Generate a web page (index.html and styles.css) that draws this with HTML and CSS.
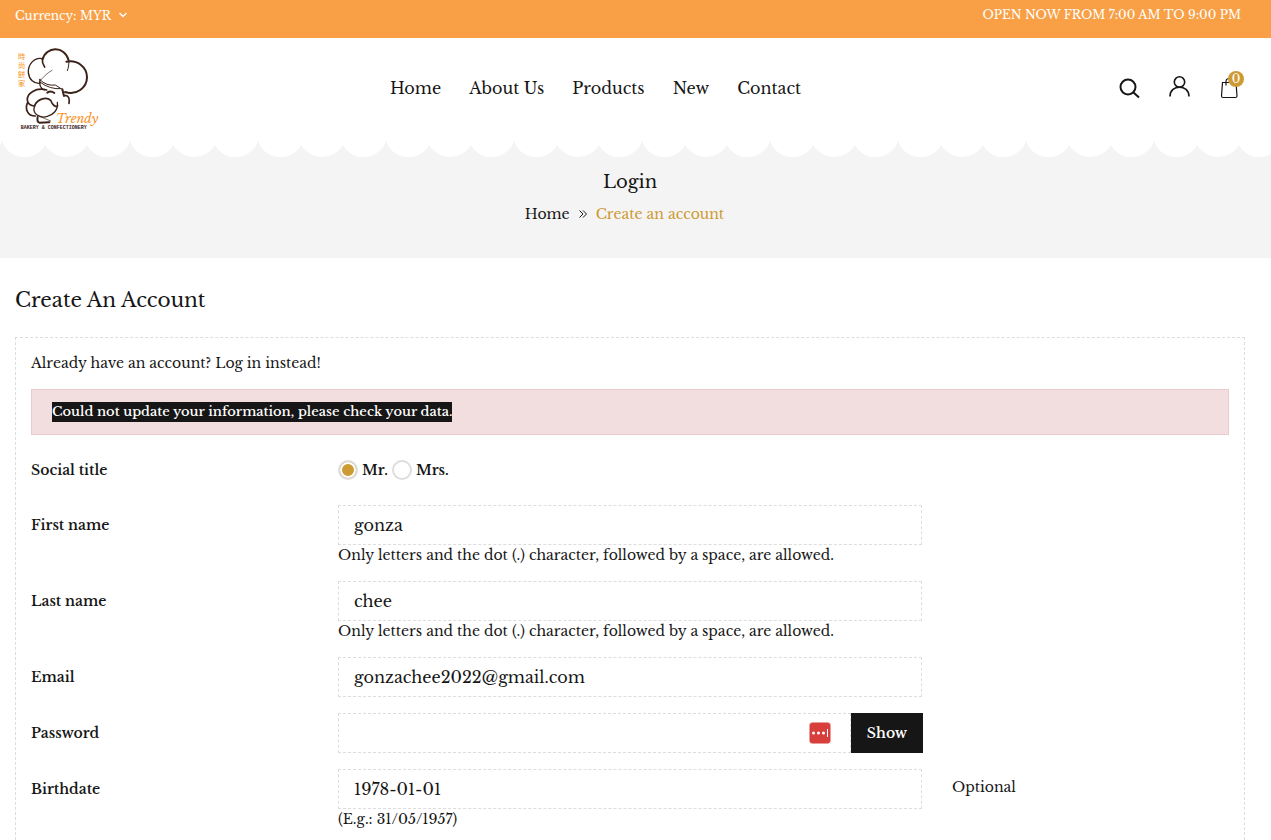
FILE: index.html
```html
<!DOCTYPE html>
<html lang="en">
<head>
  <meta charset="UTF-8">
  <meta name="viewport" content="width=device-width, initial-scale=1">
  <title>Create an account - Trendy Bakery</title>
  <link rel="stylesheet" href="styles.css">
</head>
<body>

<div class="topbar">
  <button type="button" class="currency">
    Currency: MYR
    <svg width="10" height="8" viewBox="0 0 10 8"><path d="M1.500 2 L5 5.500 L8.500 2" fill="none" stroke="#fff" stroke-width="1.500"/></svg>
  </button>
  <span>OPEN NOW FROM 7:00 AM TO 9:00 PM</span>
</div>

<header class="header">
  <a class="logo" href="#" aria-label="Trendy Bakery">
    <svg width="95" height="95" viewBox="15 0 285 285">
      <g fill="none" stroke="#3b2218" stroke-linecap="round" stroke-width="4">
        <!-- hat -->
        <path d="M98 55 C107 17 164 12 176 58" stroke-width="6"/>
        <path d="M97 53 C71 48 54 72 55 95 C57 115 72 129 90 127" stroke-width="4"/>
        <path d="M97 53 C96 63 99 71 104 78" stroke-width="5"/>
        <path d="M176 58 C178 70 175 80 172 89" stroke-width="3"/>
        <path d="M169 62 C202 55 230 78 231 108 C231 140 199 165 165 153" stroke-width="6"/>
        <path d="M88 122 C100 108 111 96 126 88" stroke-width="2"/>
        <path d="M89 116 Q110 136 136 132 L153 143" stroke-width="3"/>
        <path d="M91 124 Q120 146 154 143" stroke-width="3"/>
        <path d="M90 115 C87 130 91 142 103 147"/>
        <!-- face -->
        <path d="M110 147 C78 138 50 157 52 178 C54 190 62 194 74 195" stroke-width="5"/>
        <path d="M112 155 Q122 148 133 156" stroke-width="6"/>
        <path d="M157 145 L162 165" stroke-width="6"/>
        <path d="M165 163 Q181 164 177 187" stroke-width="5"/>
        <path d="M74 193 C84 172 110 167 122 178 C126 190 138 202 143 194" stroke-width="5"/>
        <path d="M74 195 C65 218 88 232 110 227 C130 222 145 207 142 184" stroke-width="4"/>
        <path d="M53 184 C44 203 52 225 76 225" stroke-width="5"/>
        <path d="M83 228 Q80 242 88 245 L118 244" stroke-width="6"/>
        <path d="M86 225 L122 240" stroke-width="2"/>
      </g>
      <g class="logo-cjk">
        <text x="24" y="55">時</text>
        <text x="24" y="82">尚</text>
        <text x="24" y="109">餅</text>
        <text x="24" y="136">家</text>
      </g>
      <text class="logo-name" x="138" y="246">Trendy</text>
      <text class="logo-sub" x="32" y="264">BAKERY &amp; CONFECTIONERY</text>
    </svg>
  </a>
  <nav class="nav">
    <a href="#">Home</a>
    <a href="#">About Us</a>
    <a href="#">Products</a>
    <a href="#">New</a>
    <a href="#">Contact</a>
  </nav>
  <div class="tools">
    <button type="button" aria-label="Search">
      <svg width="22" height="24" viewBox="0 0 22 24" fill="none" stroke="#161616" stroke-width="2">
        <circle cx="9" cy="11" r="7.500"/>
        <path d="M14.500 16.500 L20 21.500"/>
      </svg>
    </button>
    <a href="#" aria-label="My account">
      <svg width="22" height="24" viewBox="0 0 22 24" fill="none" stroke="#161616" stroke-width="1.600">
        <circle cx="10.500" cy="6" r="5.200"/>
        <path d="M1 20.500 C1 8 20 8 20 20.500"/>
      </svg>
    </a>
    <a href="#" class="cart" aria-label="Cart">
      <svg width="22" height="24" viewBox="0 0 22 24" fill="none" stroke="#161616" stroke-width="1.200">
        <path d="M3.500 6.500 H17 L18 20 Q18 21.500 16.500 21.500 H4 Q2.500 21.500 2.500 20 Z"/>
        <path d="M7 9.500 V5.500 Q7 2.500 10.500 2.500 Q14 2.500 14 5.500 V9.500"/>
      </svg>
      <span class="cart-count">0</span>
    </a>
  </div>
</header>

<section class="banner">
  <svg class="scallops" width="100%" height="17">
    <defs>
      <pattern id="scallop" x="2" width="128" height="17" patternUnits="userSpaceOnUse">
        <path fill="#fff" d="M0 0 V1 A23.500 23.500 0 0 0 43 5 A24.500 24.500 0 0 0 85 5 A23.500 23.500 0 0 0 128 1 V0 Z"/>
      </pattern>
    </defs>
    <rect width="100%" height="17" fill="url(#scallop)"/>
  </svg>
  <div class="banner-title">Login</div>
  <div class="breadcrumb">
    <a href="#">Home</a>
    <svg width="8" height="8" viewBox="0 0 8 8" fill="none" stroke="#161616"><path d="M0.500 0.500 L4 4 L0.500 7.500 M4 0.500 L7.500 4 L4 7.500"/></svg>
    <span class="current">Create an account</span>
  </div>
</section>

<main class="main">
  <h1>Create An Account</h1>

  <form class="register">
    <p class="login-hint">Already have an account? <a href="#">Log in instead!</a></p>

    <div class="alert"><span>Could not update your information, please check your data.</span></div>

    <div class="row row-title">
      <div class="label" id="title-label">Social title</div>
      <div class="field radios" role="radiogroup" aria-labelledby="title-label">
        <label><input type="radio" name="title" checked>Mr.</label>
        <label><input type="radio" name="title">Mrs.</label>
      </div>
    </div>

    <div class="row">
      <label class="label" for="firstname">First name</label>
      <div class="field">
        <input class="text" type="text" id="firstname" value="gonza">
        <div class="help">Only letters and the dot (.) character, followed by a space, are allowed.</div>
      </div>
    </div>

    <div class="row">
      <label class="label" for="lastname">Last name</label>
      <div class="field">
        <input class="text" type="text" id="lastname" value="chee">
        <div class="help">Only letters and the dot (.) character, followed by a space, are allowed.</div>
      </div>
    </div>

    <div class="row">
      <label class="label" for="email">Email</label>
      <div class="field">
        <input class="text" type="email" id="email" value="gonzachee2022@gmail.com">
      </div>
    </div>

    <div class="row">
      <label class="label" for="password">Password</label>
      <div class="field password">
        <input class="text" type="password" id="password">
        <svg class="key-icon" width="22" height="22" viewBox="0 0 22 22">
          <rect x="0.500" y="0.500" width="21" height="21" rx="3" fill="#d83f3c" stroke="#e89a98" stroke-width="0.500"/>
          <g fill="#fff">
            <circle cx="4.500" cy="11" r="1.500"/>
            <circle cx="9.500" cy="11" r="1.500"/>
            <circle cx="14.500" cy="11" r="1.500"/>
            <rect x="18" y="7" width="1" height="8"/>
          </g>
        </svg>
        <button type="button" class="show">Show</button>
      </div>
    </div>

    <div class="row">
      <label class="label" for="birthday">Birthdate</label>
      <div class="field">
        <input class="text" type="text" id="birthday" value="1978-01-01">
        <div class="help">(E.g.: 31/05/1957)</div>
      </div>
      <div class="optional">Optional</div>
    </div>
  </form>
</main>

</body>
</html>
```

FILE: styles.css
```css
* {
  box-sizing: border-box;
}

body {
  margin: 0;
  background: #fff;
  color: #161616;
  font-family: "Libre Baskerville", "Liberation Serif", "Noto Sans CJK TC", serif;
  font-size: 14px;
  line-height: 20px;
}

a {
  color: inherit;
  text-decoration: none;
}

button {
  font-family: inherit;
  border: 0;
  padding: 0;
  background: none;
  cursor: pointer;
}

.topbar {
  display: flex;
  justify-content: space-between;
  height: 38px;
  padding: 5px 30px 0 15px;
  background: #f99f46;
  color: #fff;
  font-size: 12px;
}

.currency {
  display: flex;
  align-items: center;
  gap: 7px;
  height: 20px;
  color: #fff;
  font-size: 12px;
}

.header {
  display: grid;
  grid-template-columns: 375px 1fr auto;
  align-items: center;
  height: 102px;
  padding: 0 30px 2px 15px;
}

.logo svg {
  display: block;
}

.logo-cjk {
  font-family: "Noto Sans CJK TC", sans-serif;
  font-size: 22px;
  fill: #f7931e;
}

.logo-name {
  font-size: 38px;
  font-style: italic;
  fill: #f7931e;
}

.logo-sub {
  font-family: "Liberation Mono", monospace;
  font-size: 15px;
  font-weight: bold;
  fill: #3b2218;
}

.nav {
  display: flex;
  gap: 28px;
  font-size: 16px;
}

.tools {
  display: flex;
  gap: 28px;
}

.tools svg {
  display: block;
}

.cart {
  position: relative;
}

.cart-count {
  position: absolute;
  top: -5px;
  right: -3px;
  width: 16px;
  height: 16px;
  border-radius: 50%;
  background: #cd9a33;
  color: #fff;
  font-size: 12px;
  line-height: 16px;
  text-align: center;
}

.banner {
  height: 118px;
  background: #f4f4f4;
  text-align: center;
}

.scallops {
  display: block;
}

.banner-title {
  padding: 15px 11px 0 0;
  font-size: 18px;
}

.breadcrumb {
  display: flex;
  justify-content: center;
  align-items: center;
  gap: 9px;
  padding: 12px 22px 0 0;
}

.current {
  color: #cd9a33;
}

.main {
  padding: 30px 26px 0 15px;
}

h1 {
  margin: 0 0 25px;
  font-size: 20px;
  font-weight: normal;
  line-height: 24px;
}

.register {
  border: 1px dashed #ddd;
  border-bottom: 0;
  padding: 15px 0 11px;
}

.login-hint {
  margin: 0 15px 16px;
}

.alert {
  margin: 0 15px 25px;
  padding: 12px 20px;
  border: 1px solid #ebcccc;
  background: #f2dede;
  font-size: 13px;
  font-weight: 500;
}

.alert span {
  display: inline-block;
  background: #161616;
  color: #fff;
}

.row {
  display: grid;
  grid-template-columns: 1fr 2fr 1fr;
  margin-bottom: 16px;
}

.row:last-child {
  margin-bottom: 0;
}

.row-title {
  margin-bottom: 25px;
}

.label {
  padding: 10px 15px 0;
  font-weight: 600;
}

.row-title .label {
  padding-top: 0;
}

.field {
  padding: 0 15px;
}

.radios {
  display: flex;
  gap: 4px;
  height: 20px;
}

.radios label {
  display: flex;
  gap: 4px;
  font-weight: 600;
}

.radios input {
  appearance: none;
  width: 20px;
  height: 20px;
  margin: 0;
  border: 2px solid #ddd;
  border-radius: 50%;
  background: #fff;
}

.radios input:checked {
  background: #cd9a33;
  box-shadow: inset 0 0 0 2px #fff;
}

.text {
  display: block;
  width: 100%;
  height: 40px;
  padding: 0 15px;
  border: 1px dashed #ddd;
  border-radius: 0;
  background: #fff;
  color: #161616;
  font-family: inherit;
  font-size: 16px;
}

.password {
  display: flex;
  position: relative;
  padding-right: 14px;
}

.password .text {
  flex: 1;
}

.key-icon {
  position: absolute;
  top: 9px;
  right: 106px;
}

.show {
  width: 72px;
  height: 40px;
  background: #161616;
  color: #fff;
  font-size: 14px;
  font-weight: 600;
}

.optional {
  padding: 8px 15px 0;
}
```
